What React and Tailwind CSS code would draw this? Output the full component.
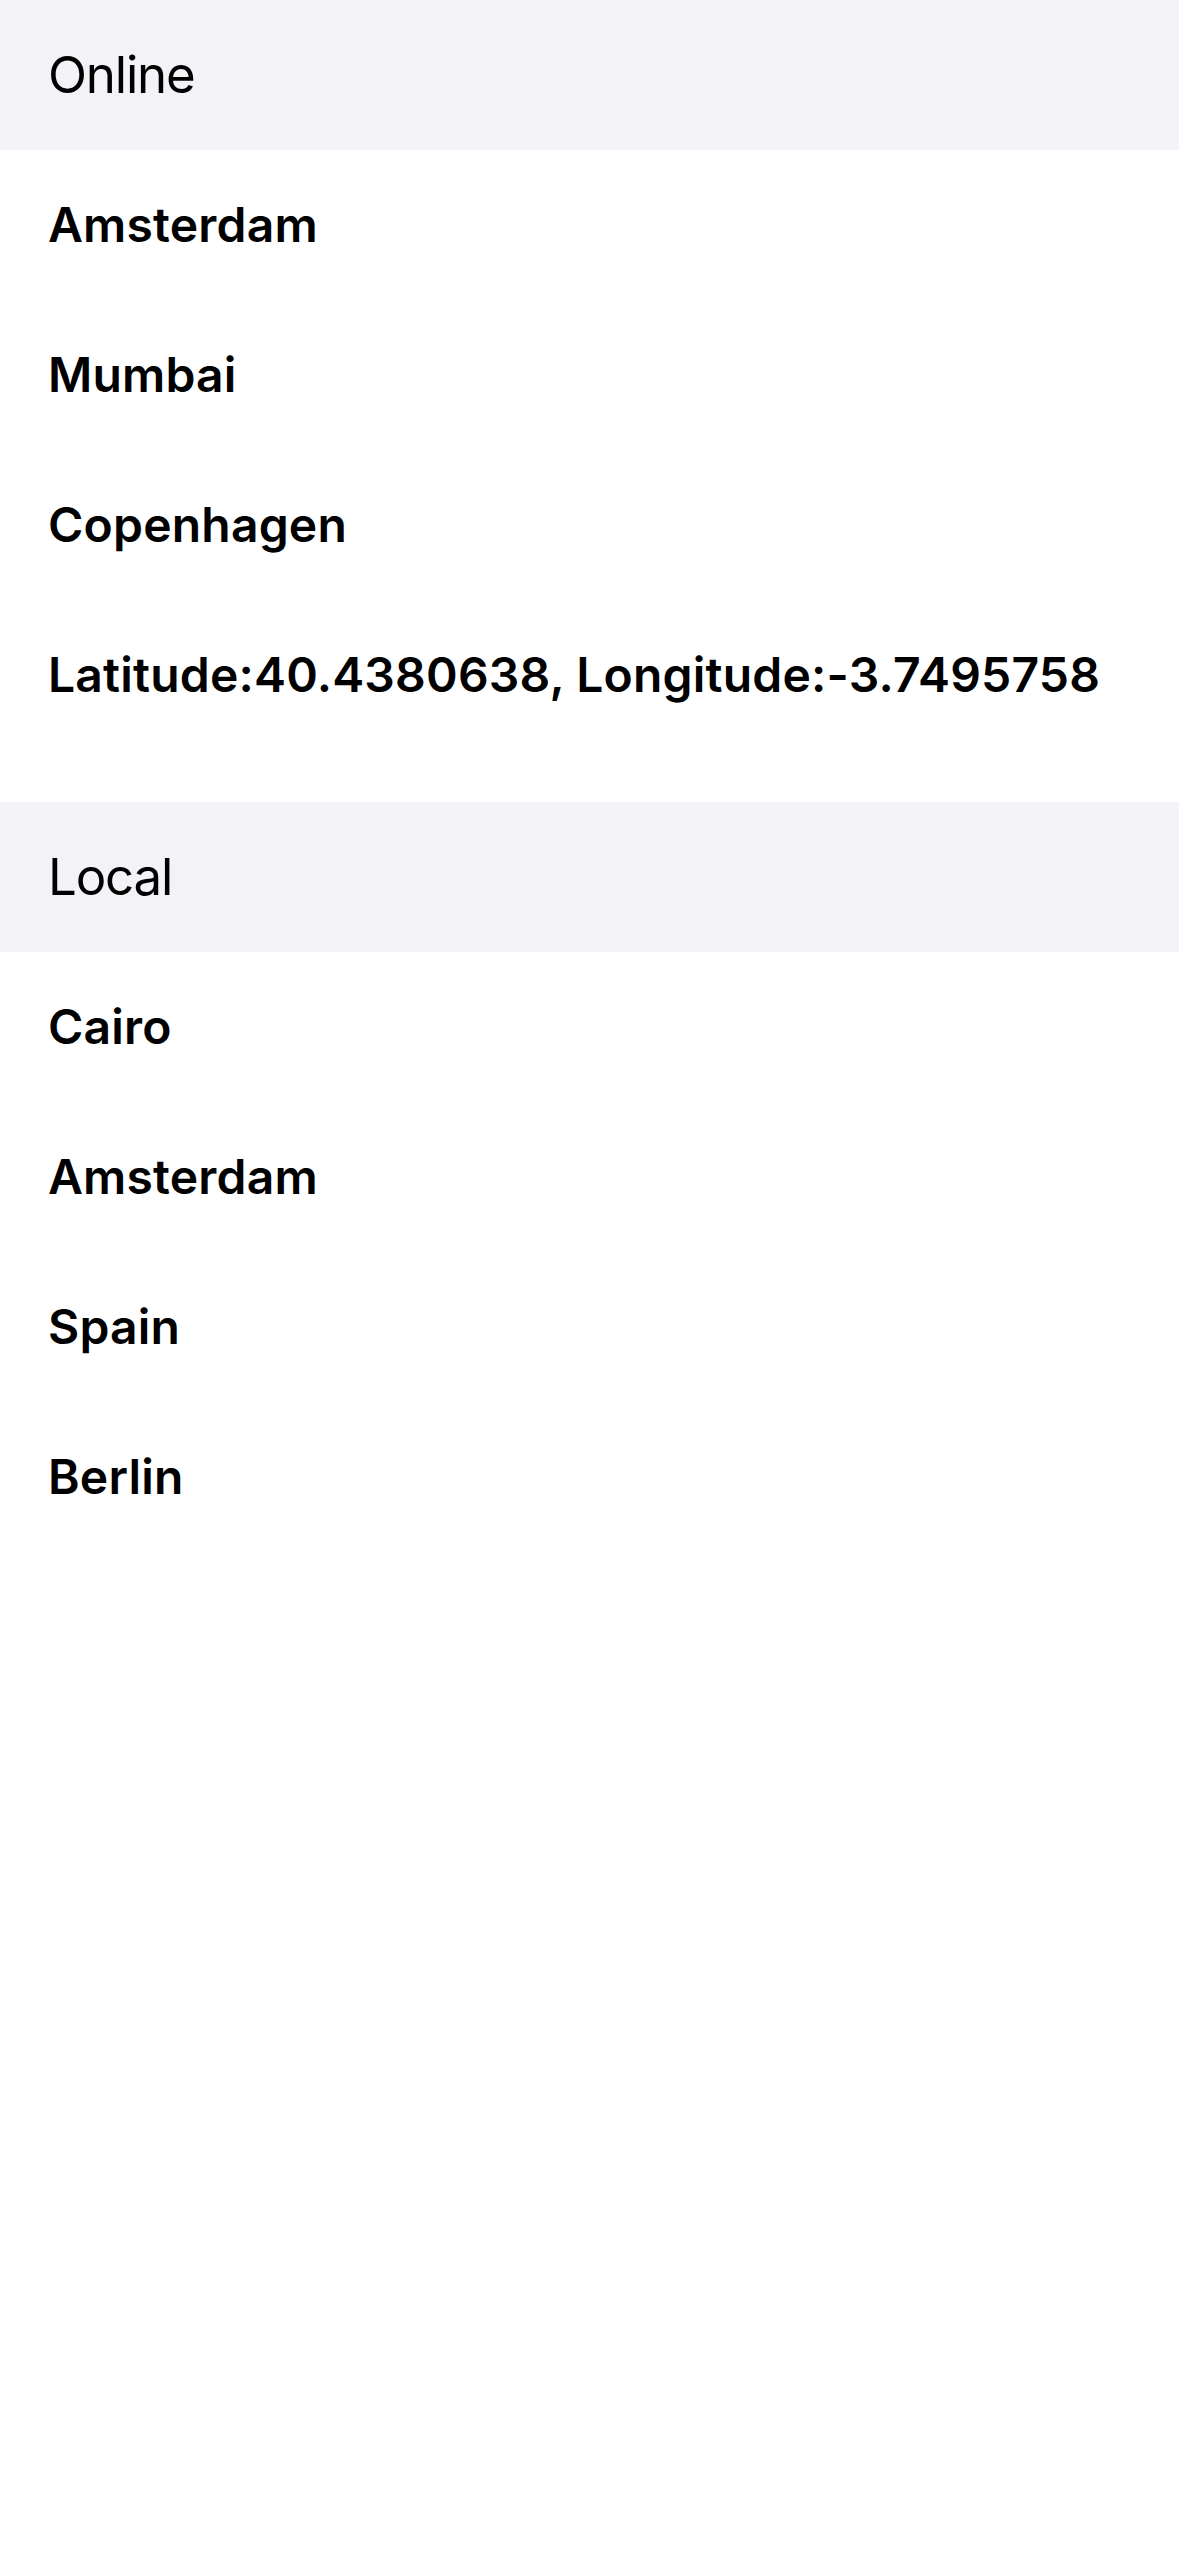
export default function App() {
  const online = [
    "Amsterdam",
    "Mumbai",
    "Copenhagen",
    "Latitude:40.4380638, Longitude:-3.7495758",
  ];
  const local = ["Cairo", "Amsterdam", "Spain", "Berlin"];

  return (
    <div className="min-h-[2556px] w-[1179px] bg-white text-black font-['Inter',sans-serif]">
      <div className="flex h-[150px] items-center bg-[#f2f2f7] px-12 text-[51px] font-normal tracking-[-1.2px]">
        Online
      </div>
      {online.map((item) => (
        <div key={item} className="flex h-[150px] items-center px-12 text-[48px] font-semibold tracking-[0.2px]">
          {item}
        </div>
      ))}
      <div className="h-[52px]" />
      <div className="flex h-[150px] items-center bg-[#f2f2f7] px-12 text-[51px] font-normal tracking-[-1.2px]">
        Local
      </div>
      {local.map((item) => (
        <div key={item} className="flex h-[150px] items-center px-12 text-[48px] font-semibold tracking-[0.2px]">
          {item}
        </div>
      ))}
    </div>
  );
}
